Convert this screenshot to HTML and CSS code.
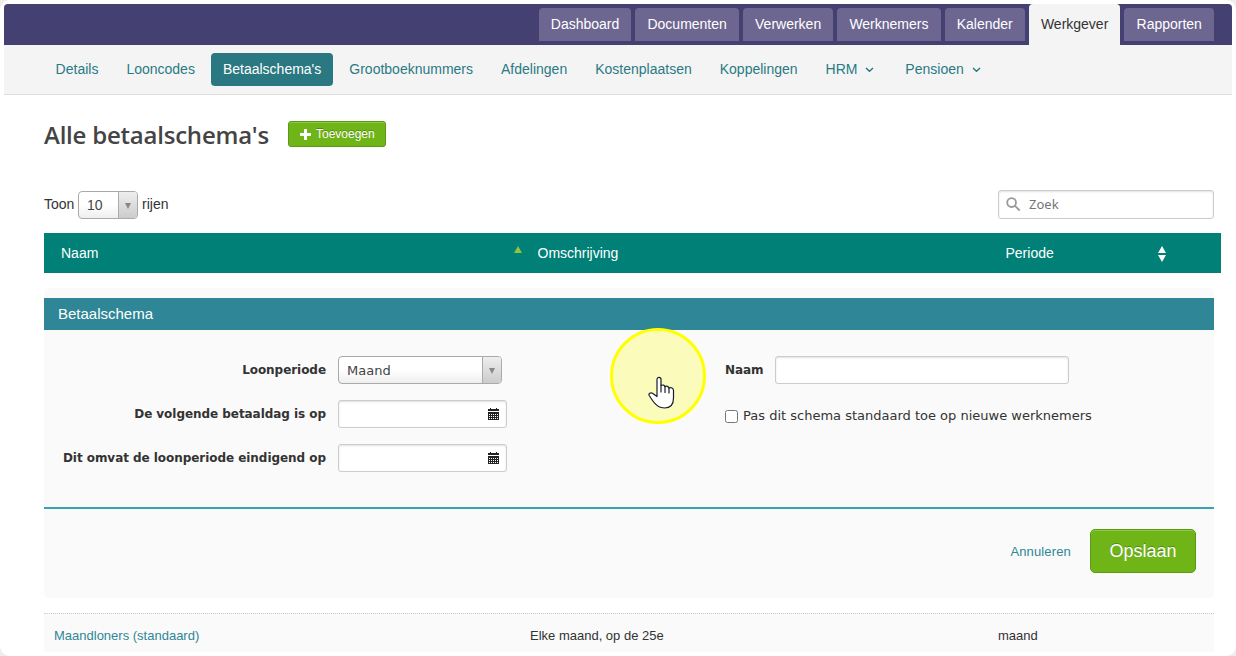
FILE: index.html
```html
<!DOCTYPE html>
<html lang="nl">
<head>
  <meta charset="UTF-8" />
  <title>Betaalschema's</title>
  <link rel="stylesheet" href="styles.css">
</head>
<body>

<div class="page">
  <nav class="main-nav">
    <a class="tab">Dashboard</a>
    <a class="tab">Documenten</a>
    <a class="tab">Verwerken</a>
    <a class="tab">Werknemers</a>
    <a class="tab">Kalender</a>
    <a class="tab active">Werkgever</a>
    <a class="tab">Rapporten</a>
  </nav>

  <nav class="sub-nav">
    <a class="sub-item">Details</a>
    <a class="sub-item">Looncodes</a>
    <a class="sub-item active">Betaalschema's</a>
    <a class="sub-item">Grootboeknummers</a>
    <a class="sub-item">Afdelingen</a>
    <a class="sub-item">Kostenplaatsen</a>
    <a class="sub-item">Koppelingen</a>
    <a class="sub-item">HRM <svg class="chevron" width="9" height="6" viewBox="0 0 9 6"><path d="M1 1l3.5 3.2L8 1" /></svg></a>
    <a class="sub-item">Pensioen <svg class="chevron" width="9" height="6" viewBox="0 0 9 6"><path d="M1 1l3.5 3.2L8 1" /></svg></a>
  </nav>

  <main class="content">
    <div class="title-row">
      <h1>Alle betaalschema's</h1>
      <button class="btn btn-add">
        <svg width="11" height="11" viewBox="0 0 11 11"><path d="M4 0h3v4h4v3H7v4H4V7H0V4h4z" fill="#fff" /></svg>
        <span>Toevoegen</span>
      </button>
    </div>

    <div class="toolbar">
      <div class="length">
        <span>Toon</span>
        <div class="select select-small"><span class="value">10</span><span class="arrow"><i></i></span></div>
        <span>rijen</span>
      </div>
      <div class="search">
        <svg width="15" height="15" viewBox="0 0 15 15"><circle cx="5.6" cy="5.6" r="4.4" /><path d="M8.9 8.9l4.8 4.6" /></svg>
        <span>Zoek</span>
      </div>
    </div>

    <div class="table-head">
      <div class="th">Naam <svg class="sort sort-up" width="8" height="7" viewBox="0 0 8 7"><path d="M4 0l4 7H0z" fill="#8cc63f" /></svg></div>
      <div class="th">Omschrijving</div>
      <div class="th">Periode <svg class="sort" width="8" height="16" viewBox="0 0 8 16"><path d="M4 0l4 7H0zM0 9h8l-4 7z" fill="#fff" /></svg></div>
    </div>

    <section class="panel">
      <h2>Betaalschema</h2>
      <div class="form">
        <div class="form-left">
          <div class="field">
            <label>Loonperiode</label>
            <div class="select select-period"><span class="value">Maand</span><span class="arrow"><i></i></span></div>
          </div>
          <div class="field">
            <label>De volgende betaaldag is op</label>
            <div class="input input-date">
              <svg width="11" height="12" viewBox="0 0 11 12"><path d="M0 1h2V0h1v1h5V0h1v1h2v2H0zM0 4h11v8H0z" fill="#222" /><path d="M1 6.500h9M1 8.500h9M1 10.500h9" stroke="#fff" stroke-dasharray="1 1" /></svg>
            </div>
          </div>
          <div class="field">
            <label>Dit omvat de loonperiode eindigend op</label>
            <div class="input input-date">
              <svg width="11" height="12" viewBox="0 0 11 12"><path d="M0 1h2V0h1v1h5V0h1v1h2v2H0zM0 4h11v8H0z" fill="#222" /><path d="M1 6.500h9M1 8.500h9M1 10.500h9" stroke="#fff" stroke-dasharray="1 1" /></svg>
            </div>
          </div>
        </div>
        <div class="form-right">
          <div class="field">
            <label>Naam</label>
            <div class="input input-name"></div>
          </div>
          <div class="check">
            <input type="checkbox">
            <span>Pas dit schema standaard toe op nieuwe werknemers</span>
          </div>
        </div>
      </div>
      <div class="actions">
        <a class="cancel">Annuleren</a>
        <button class="btn btn-save">Opslaan</button>
      </div>
    </section>

    <div class="table-row">
      <a class="link">Maandloners (standaard)</a>
      <span>Elke maand, op de 25e</span>
      <span>maand</span>
    </div>
  </main>

  <div class="pointer">
    <svg width="27" height="34" viewBox="0 0 27 34">
      <path d="M9 17.5V3.6C9 .6 13 .6 13 3.6V9.5C14.500 8.600 16.600 9 17 10.600C18.500 9.800 20.500 10.200 21 12C23 11 25.500 12.200 25.500 14.500V22C25.500 28 22.500 32 16.500 32C11 32 7.500 29 4.500 24.500L1.200 19.500C.2 17.500 2.500 16.200 4.500 17.200L9 20.500Z" fill="#fff" stroke="#1b1b2a" stroke-width="1.2" stroke-linejoin="round" />
      <path d="M13 9.500V16M17 10.600V16.500M21 12V17" stroke="#1b1b2a" stroke-width="1.2" stroke-linecap="round" />
    </svg>
  </div>
</div>

</body>
</html>
```
FILE: styles.css
```css
* {
  box-sizing: border-box;
}

html {
  background: #eee;
}

body {
  margin: 0;
  font-family: "Liberation Sans", Arial, sans-serif;
  font-size: 14px;
  color: #333;
}

.page {
  position: relative;
  height: 656px;
  padding: 4px;
  background: #fff;
  border-radius: 10px;
  overflow: hidden;
}

/* navigation */
.main-nav {
  display: flex;
  justify-content: flex-end;
  gap: 4px;
  height: 41px;
  padding: 4px 18px 0 0;
  background: #454072;
  border-radius: 4px 4px 0 0;
}

.tab {
  height: 33px;
  padding: 0 12.1px;
  line-height: 32px;
  color: #fff;
  background: #6d6690;
  border-radius: 4px 4px 0 0;
}

.tab.active {
  height: 41px;
  margin-top: -4px;
  padding-top: 4px;
  color: #333;
  background: #f4f4f4;
}

.sub-nav {
  display: flex;
  gap: 4px;
  height: 50px;
  padding: 8px 0 0 39.6px;
  background: #f4f4f4;
  border-bottom: 1px solid #ddd;
}

.sub-item {
  height: 33px;
  padding: 0 12px;
  line-height: 33px;
  color: #2a7a84;
  border-radius: 4px;
}

.sub-item.active {
  color: #fff;
  background: #2a7882;
}

.chevron {
  margin: 0 3px 1px 4px;
  fill: none;
  stroke: #2a7a84;
  stroke-width: 1.5;
}

.content {
  padding: 26px 0 0 40px;
}

.title-row {
  display: flex;
  gap: 19px;
  height: 70px;
}

h1 {
  width: 225px;
  margin: 0;
  font: 600 24px/28px "Open Sans", sans-serif;
  letter-spacing: -0.22px;
  white-space: nowrap;
  color: #444;
}

.btn {
  border: 1px solid #5a9a12;
  border-radius: 3px;
  background: #6fb518;
  box-shadow: inset 0 1px 0 #8cc94a;
  color: #fff;
  font-family: "Liberation Sans", Arial, sans-serif;
  text-shadow: 0 -1px 0 rgba(0, 0, 0, 0.25);
}

.btn-add {
  display: flex;
  align-items: center;
  gap: 5px;
  width: 98px;
  height: 26px;
  padding: 0 0 0 11px;
  font-size: 12px;
}

/* list controls */
.toolbar {
  display: flex;
  justify-content: space-between;
  height: 42px;
  padding-right: 18px;
}

.length {
  display: flex;
  gap: 4px;
  line-height: 26px;
}

.length > span:first-child {
  width: 30px;
}

.select {
  display: flex;
  height: 28px;
  border: 1px solid #aaa;
  border-radius: 4px;
  background: linear-gradient(#fff 50%, #eee);
  color: #444;
  overflow: hidden;
}

.select .value {
  flex: 1;
  padding-left: 8px;
  line-height: 27px;
}

.select .arrow {
  display: flex;
  align-items: center;
  justify-content: center;
  width: 19px;
  padding-right: 1px;
  border-left: 1px solid #aaa;
  background: linear-gradient(#eee, #ccc);
}

.select i {
  margin-top: 2px;
  border: 3px solid transparent;
  border-top: 6px solid #888;
  border-bottom: 0;
}

.select-small {
  width: 60px;
}

.search {
  display: flex;
  align-items: center;
  gap: 8px;
  width: 216px;
  height: 29px;
  margin-top: -1px;
  padding: 0 0 1px 7px;
  border: 1px solid #ccc;
  border-radius: 3px;
  box-shadow: inset 0 1px 2px rgba(0, 0, 0, 0.12);
  font: 13px "Noto Sans", sans-serif;
  color: #757575;
}

.search svg {
  margin-top: 1px;
  fill: none;
  stroke: #999;
  stroke-width: 1.8;
}

.table-head {
  display: grid;
  grid-template-columns: 478px 468px 176px 55px;
  width: 1177px;
  height: 40px;
  background: #008076;
  color: #fff;
  line-height: 40px;
}

.th {
  display: flex;
  align-items: center;
  justify-content: space-between;
  padding-left: 15.5px;
}

.th:first-child {
  padding-left: 17px;
}

.sort {
  margin-top: 2px;
}

.sort-up {
  margin-top: -7px;
}

/* edit panel */
.panel {
  width: 1170px;
  height: 310px;
  margin-top: 15px;
  padding-top: 10px;
  background: #fafafa;
  border-radius: 5px;
}

h2 {
  height: 32px;
  margin: 0;
  padding-left: 14px;
  background: #2e8696;
  color: #fff;
  font-size: 15px;
  font-weight: normal;
  line-height: 32px;
}

.form {
  display: flex;
  height: 179px;
  padding-top: 26px;
  border-bottom: 2px solid #3ba3b0;
  font: 13px "DejaVu Sans", Verdana, sans-serif;
}

.form-left {
  width: 681px;
}

.field {
  display: flex;
  gap: 12px;
  height: 44px;
  line-height: 29px;
}

.field label {
  width: 38px;
  font-size: 12px;
  font-weight: bold;
  letter-spacing: -0.05px;
  white-space: nowrap;
}

.form-left label {
  width: 282px;
  text-align: right;
}

.select-period {
  width: 164px;
}

.input {
  height: 28px;
  border: 1px solid #ccc;
  border-radius: 3px;
  background: #fff;
  box-shadow: inset 0 1px 2px rgba(0, 0, 0, 0.12);
}

.input-date {
  display: flex;
  align-items: center;
  justify-content: flex-end;
  width: 169px;
  padding-right: 7px;
}

.input-name {
  width: 294px;
}

.check {
  display: flex;
  gap: 5px;
  line-height: 32px;
  white-space: nowrap;
}

.check input {
  width: 13px;
  height: 13px;
  margin: 10px 0 0;
}

.actions {
  display: flex;
  align-items: center;
  justify-content: flex-end;
  gap: 19px;
  height: 84px;
  padding-right: 18px;
}

.cancel,
.table-row {
  font-size: 13px;
}

.cancel {
  letter-spacing: 0.15px;
}

.cancel,
.link {
  color: #2e8696;
}

.btn-save {
  width: 106px;
  height: 44px;
  border-radius: 5px;
  font-size: 18px;
}

.table-row {
  display: grid;
  grid-template-columns: 476px 468px 206px;
  width: 1170px;
  height: 39px;
  margin-top: 15px;
  padding-left: 10px;
  border-top: 1px dotted #ccc;
  background: #fafafa;
  line-height: 43px;
}

/* mouse pointer with highlight */
.pointer {
  position: absolute;
  left: 610px;
  top: 328px;
  width: 96px;
  height: 96px;
  padding: 47px 0 0 37px;
  border: 3px solid #ff0;
  border-radius: 50%;
  background: rgba(255, 255, 0, 0.25);
}

.pointer svg {
  display: block;
  margin: -2px 0 0 -2px;
  fill: none;
}
```
